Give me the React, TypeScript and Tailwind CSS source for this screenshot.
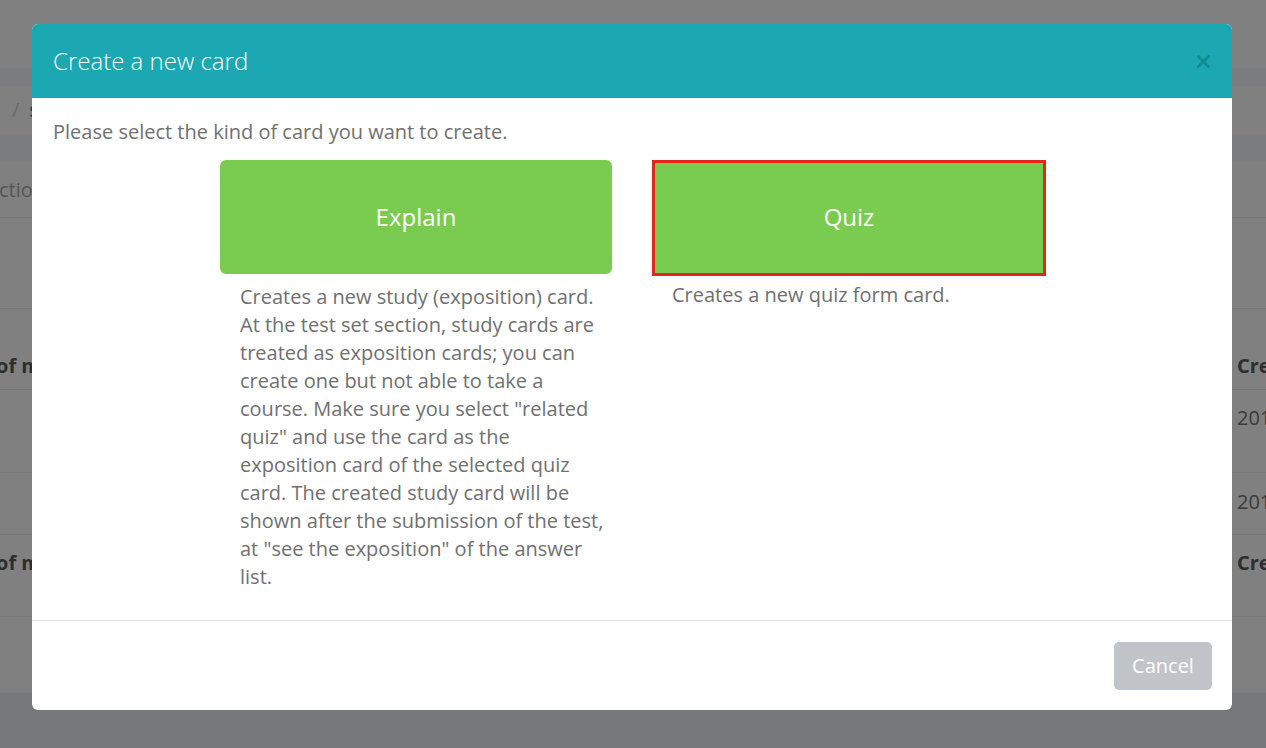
import React from "react";

export default function App() {
  const font = { fontFamily: '"Open Sans", "Liberation Sans", sans-serif' };
  return (
    <div className="relative w-[1266px] h-[748px] overflow-hidden bg-[#77787a]" style={font}>
      {/* dimmed background page */}
      <div className="flex flex-col">
        <div className="h-[68px] bg-[#808080]" />
        <div className="h-[18px] bg-[#7b7c7d]" />
        <div className="h-[48px] bg-[#808080] flex items-center pl-[12px] gap-[10px] text-[20px]">
          <span className="text-[#6a6a6a]">/</span>
          <span className="text-[#2f3a4a] font-semibold">s</span>
        </div>
        <div className="h-[28px] bg-[#7b7c7d]" />
        <div className="h-[56px] bg-[#808080] border-b border-[#767676] flex items-center text-[20px] text-[#555]">
          <span className="-ml-[1px]">ctions</span>
        </div>
        <div className="h-[91px] bg-[#808080] border-b border-[#767676]" />
        <div className="h-[81px] bg-[#808080] border-b border-[#767676] flex items-end justify-between pb-[8px] text-[20px] font-bold text-[#2e2e2e]">
          <span className="-ml-[4px] whitespace-nowrap">of marks</span>
          <span className="w-[29px] overflow-hidden whitespace-nowrap">Created</span>
        </div>
        <div className="h-[83px] bg-[#808080] border-b border-[#767676] flex justify-end pt-[13px] text-[20px] text-[#3a3a3a]">
          <span className="w-[29px] overflow-hidden whitespace-nowrap">2019</span>
        </div>
        <div className="h-[62px] bg-[#808080] border-b border-[#767676] flex justify-end pt-[14px] text-[20px] text-[#3a3a3a]">
          <span className="w-[29px] overflow-hidden whitespace-nowrap">2019</span>
        </div>
        <div className="h-[82px] bg-[#808080] border-b border-[#767676] flex justify-between pt-[13px] text-[20px] font-bold text-[#2e2e2e]">
          <span className="-ml-[4px] whitespace-nowrap">of marks</span>
          <span className="w-[29px] overflow-hidden whitespace-nowrap">Created</span>
        </div>
        <div className="h-[76px] bg-[#808080]" />
      </div>

      {/* modal */}
      <div className="absolute left-[32px] top-[24px] w-[1200px] rounded-[6px] overflow-hidden bg-white flex flex-col">
        <div className="h-[74px] bg-[#1ba8b3] flex items-center justify-between pl-[21px] pr-[22px]">
          <span className="text-[24px] font-light text-white">Create a new card</span>
          <svg width="13" height="13" viewBox="0 0 13 13">
            <path d="M1.5 1.5 L11.5 11.5 M11.5 1.5 L1.5 11.5" stroke="#128a94" strokeWidth="2.8" strokeLinecap="square" />
          </svg>
        </div>
        <div className="pt-[20px] pb-[29px] px-[21px]">
          <p className="text-[20px] leading-[28px] text-[#707070]">
            Please select the kind of card you want to create.
          </p>
          <div className="flex justify-center gap-[40px] mt-[14px]">
            <div className="w-[392px] flex flex-col">
              <div className="h-[114px] rounded-[6px] bg-[#7acc50] flex items-center justify-center text-white text-[24px]">
                Explain
              </div>
              <p className="mt-[9px] pl-[20px] pr-[6px] text-[20px] leading-[28px] text-[#707070]">
                Creates a new study (exposition) card. At the test set section, study cards are treated as exposition cards; you can create one but not able to take a course. Make sure you select "related quiz" and use the card as the exposition card of the selected quiz card. The created study card will be shown after the submission of the test, at "see the exposition" of the answer list.
              </p>
            </div>
            <div className="w-[392px] flex flex-col">
              <div className="w-[394px] h-[116px] border-[3px] border-[#e2261b] bg-[#7acc50] flex items-center justify-center text-white text-[24px] pb-[2px]">
                Quiz
              </div>
              <p className="mt-[5px] pl-[20px] pr-[6px] text-[20px] leading-[28px] text-[#707070]">
                Creates a new quiz form card.
              </p>
            </div>
          </div>
        </div>
        <div className="h-[90px] border-t border-[#e5e5e5] flex items-center justify-end pr-[20px]">
          <div className="w-[98px] h-[48px] rounded-[5px] bg-[#c1c5c9] flex items-center justify-center text-white text-[20px]">
            Cancel
          </div>
        </div>
      </div>
    </div>
  );
}
